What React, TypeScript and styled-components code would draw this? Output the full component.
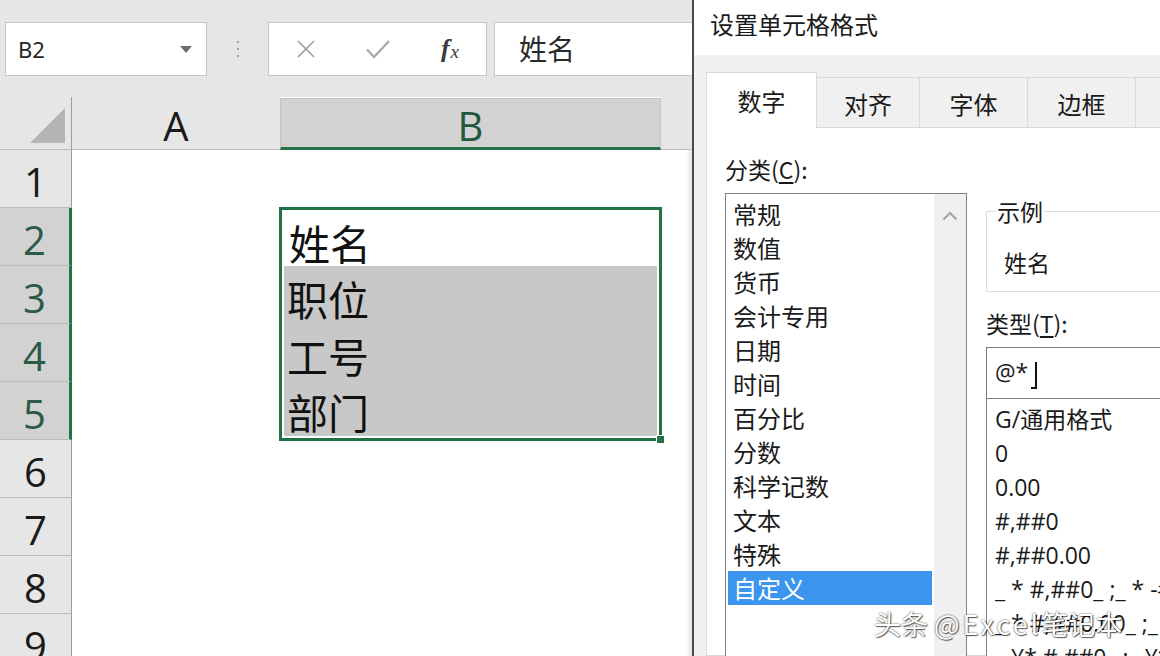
import React from "react";
import styled, { createGlobalStyle } from "styled-components";

const CJK = `"Noto Sans CJK SC", "Noto Sans", sans-serif`;
const UI = `"Noto Sans", "Noto Sans CJK SC", sans-serif`;
const WIDE = `"Open Sans", "Noto Sans CJK SC", sans-serif`;
const NUM = `"Open Sans", "Noto Sans", sans-serif`;
const GREEN = "#217346";

const GlobalStyle = createGlobalStyle`
  html, body { margin: 0; padding: 0; background: #fff; overflow: hidden; }
  body { font-family: ${UI}; }
  #root { width: 1160px; height: 656px; }
  * { box-sizing: border-box; }
`;

const Screen = styled.div`
  position: relative;
  display: flex;
  width: 1160px;
  height: 656px;
  overflow: hidden;
  background: #e6e6e6;
`;

/* ---------------- Excel pane ---------------- */

const ExcelPane = styled.div`
  width: 692px;
  flex: none;
  display: flex;
  flex-direction: column;
  background: #e6e6e6;
  overflow: hidden;
`;

const Toolbar = styled.div`
  height: 97px;
  flex: none;
  display: flex;
  align-items: flex-start;
  padding: 22px 0 0 5px;
`;

const NameBox = styled.div`
  width: 202px;
  height: 54px;
  flex: none;
  background: #fff;
  border: 1px solid #c6c6c6;
  display: flex;
  align-items: center;
  justify-content: space-between;
  padding: 0 14px 0 12px;
  font: 400 22px ${UI};
  color: #262626;
`;

const Grip = styled.div`
  width: 61px;
  height: 54px;
  flex: none;
  display: flex;
  flex-direction: column;
  align-items: center;
  justify-content: center;
  gap: 5px;
`;

const GripDot = styled.i`
  width: 2px;
  height: 2px;
  border-radius: 1px;
  background: #8a8a8a;
`;

const FxBox = styled.div`
  width: 219px;
  height: 54px;
  flex: none;
  background: #fff;
  border: 1px solid #c6c6c6;
  display: grid;
  grid-template-columns: repeat(3, 72px);
  padding-left: 1px;
`;

const FxButton = styled.div`
  display: flex;
  align-items: center;
  justify-content: center;
`;

const FxGlyph = styled.span`
  font-family: "Liberation Serif", "DejaVu Serif", serif;
  font-style: italic;
  font-weight: 700;
  color: #3a3a3a;
  font-size: 26px;
  line-height: 1;
  & > sub {
    font-size: 19px;
    font-weight: 400;
    vertical-align: -1px;
    margin-left: 1px;
  }
`;

const FormulaInput = styled.div`
  width: 230px;
  height: 54px;
  flex: none;
  margin-left: 7px;
  background: #fff;
  border: 1px solid #c6c6c6;
  display: flex;
  align-items: center;
  padding: 0 0 2px 24px;
  font: 400 28px ${CJK};
  color: #2a2a2a;
`;

const Sheet = styled.div`
  flex: 1;
  min-height: 0;
  display: grid;
  grid-template-columns: 72px 208px 381px 1fr;
  grid-template-rows: 53px repeat(9, 58px);
  background: #fff;
  overflow: hidden;
  box-shadow: inset -7px 0 6px -5px rgba(0, 0, 0, 0.14);
`;

const Corner = styled.div`
  grid-area: 1 / 1;
  background: #e6e6e6;
  border-right: 1px solid #9d9d9d;
  border-bottom: 1px solid #bdbdbd;
  display: flex;
  align-items: flex-end;
  justify-content: flex-end;
  padding: 0 6px 6px 0;
`;

const ColHeader = styled.div<{ $col: number; $selected?: boolean }>`
  grid-row: 1;
  grid-column: ${(p) => p.$col};
  display: flex;
  align-items: center;
  justify-content: center;
  padding-top: 4px;
  font: 400 40px ${NUM};
  color: ${(p) => (p.$selected ? "#1f5a3c" : "#1a1a1a")};
  background: ${(p) => (p.$selected ? "#d2d2d2" : "#e6e6e6")};
  border-bottom: ${(p) => (p.$selected ? `3px solid ${GREEN}` : "1px solid #bdbdbd")};
  ${(p) =>
    p.$selected &&
    `margin-top: 1px; border-top: 1px solid #c4c4c4; border-left: 1px solid #c4c4c4; border-right: 1px solid #c4c4c4;`}
`;

const RowHeader = styled.div<{ $row: number; $selected?: boolean }>`
  grid-column: 1;
  grid-row: ${(p) => p.$row + 1};
  display: flex;
  align-items: center;
  justify-content: center;
  padding-top: 6px;
  font: 400 40px ${NUM};
  color: ${(p) => (p.$selected ? "#2b5a45" : "#1a1a1a")};
  background: ${(p) => (p.$selected ? "#d2d2d2" : "#e6e6e6")};
  border-bottom: 1px solid #bdbdbd;
  border-right: ${(p) => (p.$selected ? `3px solid ${GREEN}` : "1px solid #9d9d9d")};
`;

const Selection = styled.div`
  position: relative;
  grid-column: 3;
  grid-row: 3 / 7;
  margin: -1px -1px -1px -1px;
  border: 3px solid ${GREEN};
  background: #fff;
  display: flex;
  flex-direction: column;
  padding: 0 2px 2px 2px;
`;

const FillHandle = styled.span`
  position: absolute;
  right: -6px;
  bottom: -6px;
  width: 9px;
  height: 9px;
  background: ${GREEN};
  border: 1px solid #fff;
`;

const SelectedFill = styled.div`
  flex: 1;
  display: flex;
  flex-direction: column;
  background: #c8c8c8;
`;

const CellText = styled.div<{ $first?: boolean }>`
  height: ${(p) => (p.$first ? "56px" : "auto")};
  flex: ${(p) => (p.$first ? "none" : "1")};
  display: flex;
  align-items: center;
  padding: 8px 0 0 ${(p) => (p.$first ? "5px" : "3px")};
  font: 400 41px ${CJK};
  color: #111;
  line-height: 1;
`;

/* ---------------- Dialog ---------------- */

const Dialog = styled.div`
  flex: 1;
  min-width: 0;
  border-left: 2px solid #4a4a4a;
  background: #f0f0f0;
  display: flex;
  flex-direction: column;
  overflow: hidden;
`;

const TitleBar = styled.div`
  height: 55px;
  flex: none;
  background: #fff;
  display: flex;
  align-items: center;
  padding: 0 0 9px 16px;
  font: 400 24px ${CJK};
  color: #1a1a1a;
  white-space: nowrap;
`;

const DialogBody = styled.div`
  flex: 1;
  display: flex;
  flex-direction: column;
  padding: 17px 0 0 12px;
  min-height: 0;
`;

const TabStrip = styled.div`
  display: flex;
  align-items: flex-end;
  height: 55px;
  flex: none;
`;

const Tab = styled.div<{ $active?: boolean; $w: number }>`
  position: relative;
  z-index: ${(p) => (p.$active ? 1 : 0)};
  width: ${(p) => p.$w}px;
  flex: none;
  height: ${(p) => (p.$active ? "56px" : "50px")};
  margin-bottom: ${(p) => (p.$active ? "-1px" : "0")};
  margin-right: -1px;
  background: ${(p) => (p.$active ? "#fff" : "#f0f0f0")};
  border: 1px solid #d9d9d9;
  border-bottom: none;
  display: flex;
  align-items: center;
  justify-content: center;
  padding-top: ${(p) => (p.$active ? "0" : "2px")};
  font: 400 24px ${CJK};
  color: #1a1a1a;
`;

const Panel = styled.div`
  flex: 1;
  min-height: 0;
  background: #fff;
  border: 1px solid #d9d9d9;
  border-right: none;
  padding: 26px 0 0 18px;
  display: grid;
  grid-template-columns: 242px 320px;
  column-gap: 19px;
  align-items: start;
`;

const Column = styled.div`
  display: flex;
  flex-direction: column;
`;

const FieldLabel = styled.div<{ $gap?: number }>`
  font: 400 23px ${CJK};
  line-height: 30px;
  color: #1a1a1a;
  margin-top: ${(p) => p.$gap ?? 0}px;
  white-space: nowrap;
  & > u {
    text-underline-offset: 3px;
  }
`;

const CategoryBox = styled.div`
  margin-top: 9px;
  height: 480px;
  border: 1px solid #828282;
  background: #fff;
  display: flex;
`;

const CategoryItems = styled.div`
  flex: 1;
  padding: 3px 2px 0 2px;
`;

const ListItem = styled.div<{ $selected?: boolean; $wide?: boolean }>`
  height: 34px;
  padding-left: ${(p) => (p.$wide ? "8px" : "5px")};
  font: 400 ${(p) => (p.$wide ? "23px" : "24px")} ${(p) => (p.$wide ? WIDE : CJK)};
  line-height: 34px;
  color: ${(p) => (p.$selected ? "#fff" : "#1a1a1a")};
  background: ${(p) => (p.$selected ? "#3b95ee" : "transparent")};
  white-space: pre;
`;

const ScrollTrack = styled.div`
  width: 32px;
  flex: none;
  background: #f0f0f0;
  display: flex;
  justify-content: center;
  padding-top: 17px;
`;

const SampleGroup = styled.fieldset`
  margin: 45px 0 0 0;
  padding: 0 0 0 8px;
  border: 1px solid #dcdcdc;
  border-right: none;
  min-width: 0;
`;

const SampleLegend = styled.legend`
  padding: 0 2px;
  font: 400 23px ${CJK};
  line-height: 24px;
  color: #1a1a1a;
`;

const SampleValue = styled.div`
  height: 68px;
  display: flex;
  align-items: center;
  padding: 10px 0 0 9px;
  font: 400 23px ${CJK};
  color: #1a1a1a;
`;

const TypeInput = styled.div`
  margin-top: 9px;
  height: 52px;
  border: 1px solid #7a7a7a;
  border-right: none;
  background: #fff;
  display: flex;
  align-items: center;
  padding: 0 0 2px 8px;
  font: 400 23px ${WIDE};
  color: #1a1a1a;
`;

const Caret = styled.span`
  display: inline-block;
  width: 6px;
  height: 27px;
  margin-left: 3px;
  margin-top: 6px;
  border-right: 2px solid #111;
  border-bottom: 2px solid #111;
`;

const FormatList = styled.div`
  height: 300px;
  border: 1px solid #828282;
  border-top: none;
  border-right: none;
  background: #fff;
  padding: 3px 0 0 0;
  overflow: hidden;
`;

const Watermark = styled.div`
  position: absolute;
  left: 874px;
  top: 604px;
  font: 400 27px ${CJK};
  color: #fff;
  white-space: nowrap;
  text-shadow: 0 0 2px rgba(0, 0, 0, 0.75), 1px 1px 1px rgba(0, 0, 0, 0.55);
  & > span {
    letter-spacing: 3px;
  }
`;

/* ---------------- Icons ---------------- */

const DropTriangle = () => (
  <svg width="12" height="7" viewBox="0 0 12 7">
    <polygon points="0,0 12,0 6,7" fill="#6d6d6d" />
  </svg>
);

const CancelIcon = () => (
  <svg width="20" height="20" viewBox="0 0 20 20">
    <path d="M2 2L18 18M18 2L2 18" stroke="#9b9b9b" strokeWidth="1.6" fill="none" />
  </svg>
);

const CheckIcon = () => (
  <svg width="26" height="20" viewBox="0 0 26 20">
    <path d="M2 10.5L9 18L24 2" stroke="#ababab" strokeWidth="2.4" fill="none" />
  </svg>
);

const CornerTriangle = () => (
  <svg width="35" height="35" viewBox="0 0 35 35">
    <polygon points="35,0 35,35 0,35" fill="#b5b5b5" />
  </svg>
);

const ChevronUp = () => (
  <svg width="16" height="10" viewBox="0 0 16 10">
    <path d="M1.5 8.5L8 2L14.5 8.5" stroke="#a3a3a3" strokeWidth="2" fill="none" />
  </svg>
);

/* ---------------- Data ---------------- */

const rows = [1, 2, 3, 4, 5, 6, 7, 8, 9];
const selectedRows = new Set([2, 3, 4, 5]);

const categories = [
  "常规",
  "数值",
  "货币",
  "会计专用",
  "日期",
  "时间",
  "百分比",
  "分数",
  "科学记数",
  "文本",
  "特殊",
  "自定义",
];

const formats = [
  "G/通用格式",
  "0",
  "0.00",
  "#,##0",
  "#,##0.00",
  '_ * #,##0_ ;_ * -#,##0_ ;_ * "-"_ ;_ @_ ',
  '_ * #,##0.00_ ;_ * -#,##0.00_ ;_ * "-"??_ ;_ @_ ',
  '_ ¥* #,##0_ ;_ ¥* -#,##0_ ;_ ¥* "-"_ ;_ @_ ',
];

const tabs = [
  { label: "数字", w: 111, active: true },
  { label: "对齐", w: 104 },
  { label: "字体", w: 109 },
  { label: "边框", w: 109 },
  { label: "填充", w: 106 },
];

export default function App() {
  return (
    <>
      <GlobalStyle />
      <Screen>
        <ExcelPane>
          <Toolbar>
            <NameBox>
              <span>B2</span>
              <DropTriangle />
            </NameBox>
            <Grip>
              <GripDot />
              <GripDot />
              <GripDot />
            </Grip>
            <FxBox>
              <FxButton>
                <CancelIcon />
              </FxButton>
              <FxButton>
                <CheckIcon />
              </FxButton>
              <FxButton>
                <FxGlyph>
                  f<sub>x</sub>
                </FxGlyph>
              </FxButton>
            </FxBox>
            <FormulaInput>姓名</FormulaInput>
          </Toolbar>
          <Sheet>
            <Corner>
              <CornerTriangle />
            </Corner>
            <ColHeader $col={2}>A</ColHeader>
            <ColHeader $col={3} $selected>
              B
            </ColHeader>
            <ColHeader $col={4} />
            {rows.map((r) => (
              <RowHeader key={r} $row={r} $selected={selectedRows.has(r)}>
                {r}
              </RowHeader>
            ))}
            <Selection>
              <CellText $first>姓名</CellText>
              <SelectedFill>
                <CellText>职位</CellText>
                <CellText>工号</CellText>
                <CellText>部门</CellText>
              </SelectedFill>
              <FillHandle />
            </Selection>
          </Sheet>
        </ExcelPane>

        <Dialog>
          <TitleBar>设置单元格格式</TitleBar>
          <DialogBody>
            <TabStrip>
              {tabs.map((t) => (
                <Tab key={t.label} $w={t.w} $active={t.active}>
                  {t.label}
                </Tab>
              ))}
            </TabStrip>
            <Panel>
              <Column>
                <FieldLabel>
                  分类(<u>C</u>):
                </FieldLabel>
                <CategoryBox>
                  <CategoryItems>
                    {categories.map((c) => (
                      <ListItem key={c} $selected={c === "自定义"}>
                        {c}
                      </ListItem>
                    ))}
                  </CategoryItems>
                  <ScrollTrack>
                    <ChevronUp />
                  </ScrollTrack>
                </CategoryBox>
              </Column>
              <Column>
                <SampleGroup>
                  <SampleLegend>示例</SampleLegend>
                  <SampleValue>姓名</SampleValue>
                </SampleGroup>
                <FieldLabel $gap={16}>
                  类型(<u>T</u>):
                </FieldLabel>
                <TypeInput>
                  @*
                  <Caret />
                </TypeInput>
                <FormatList>
                  {formats.map((f) => (
                    <ListItem key={f} $wide>
                      {f}
                    </ListItem>
                  ))}
                </FormatList>
              </Column>
            </Panel>
          </DialogBody>
        </Dialog>

        <Watermark>
          头条 <span>@Excel</span>笔记本
        </Watermark>
      </Screen>
    </>
  );
}
